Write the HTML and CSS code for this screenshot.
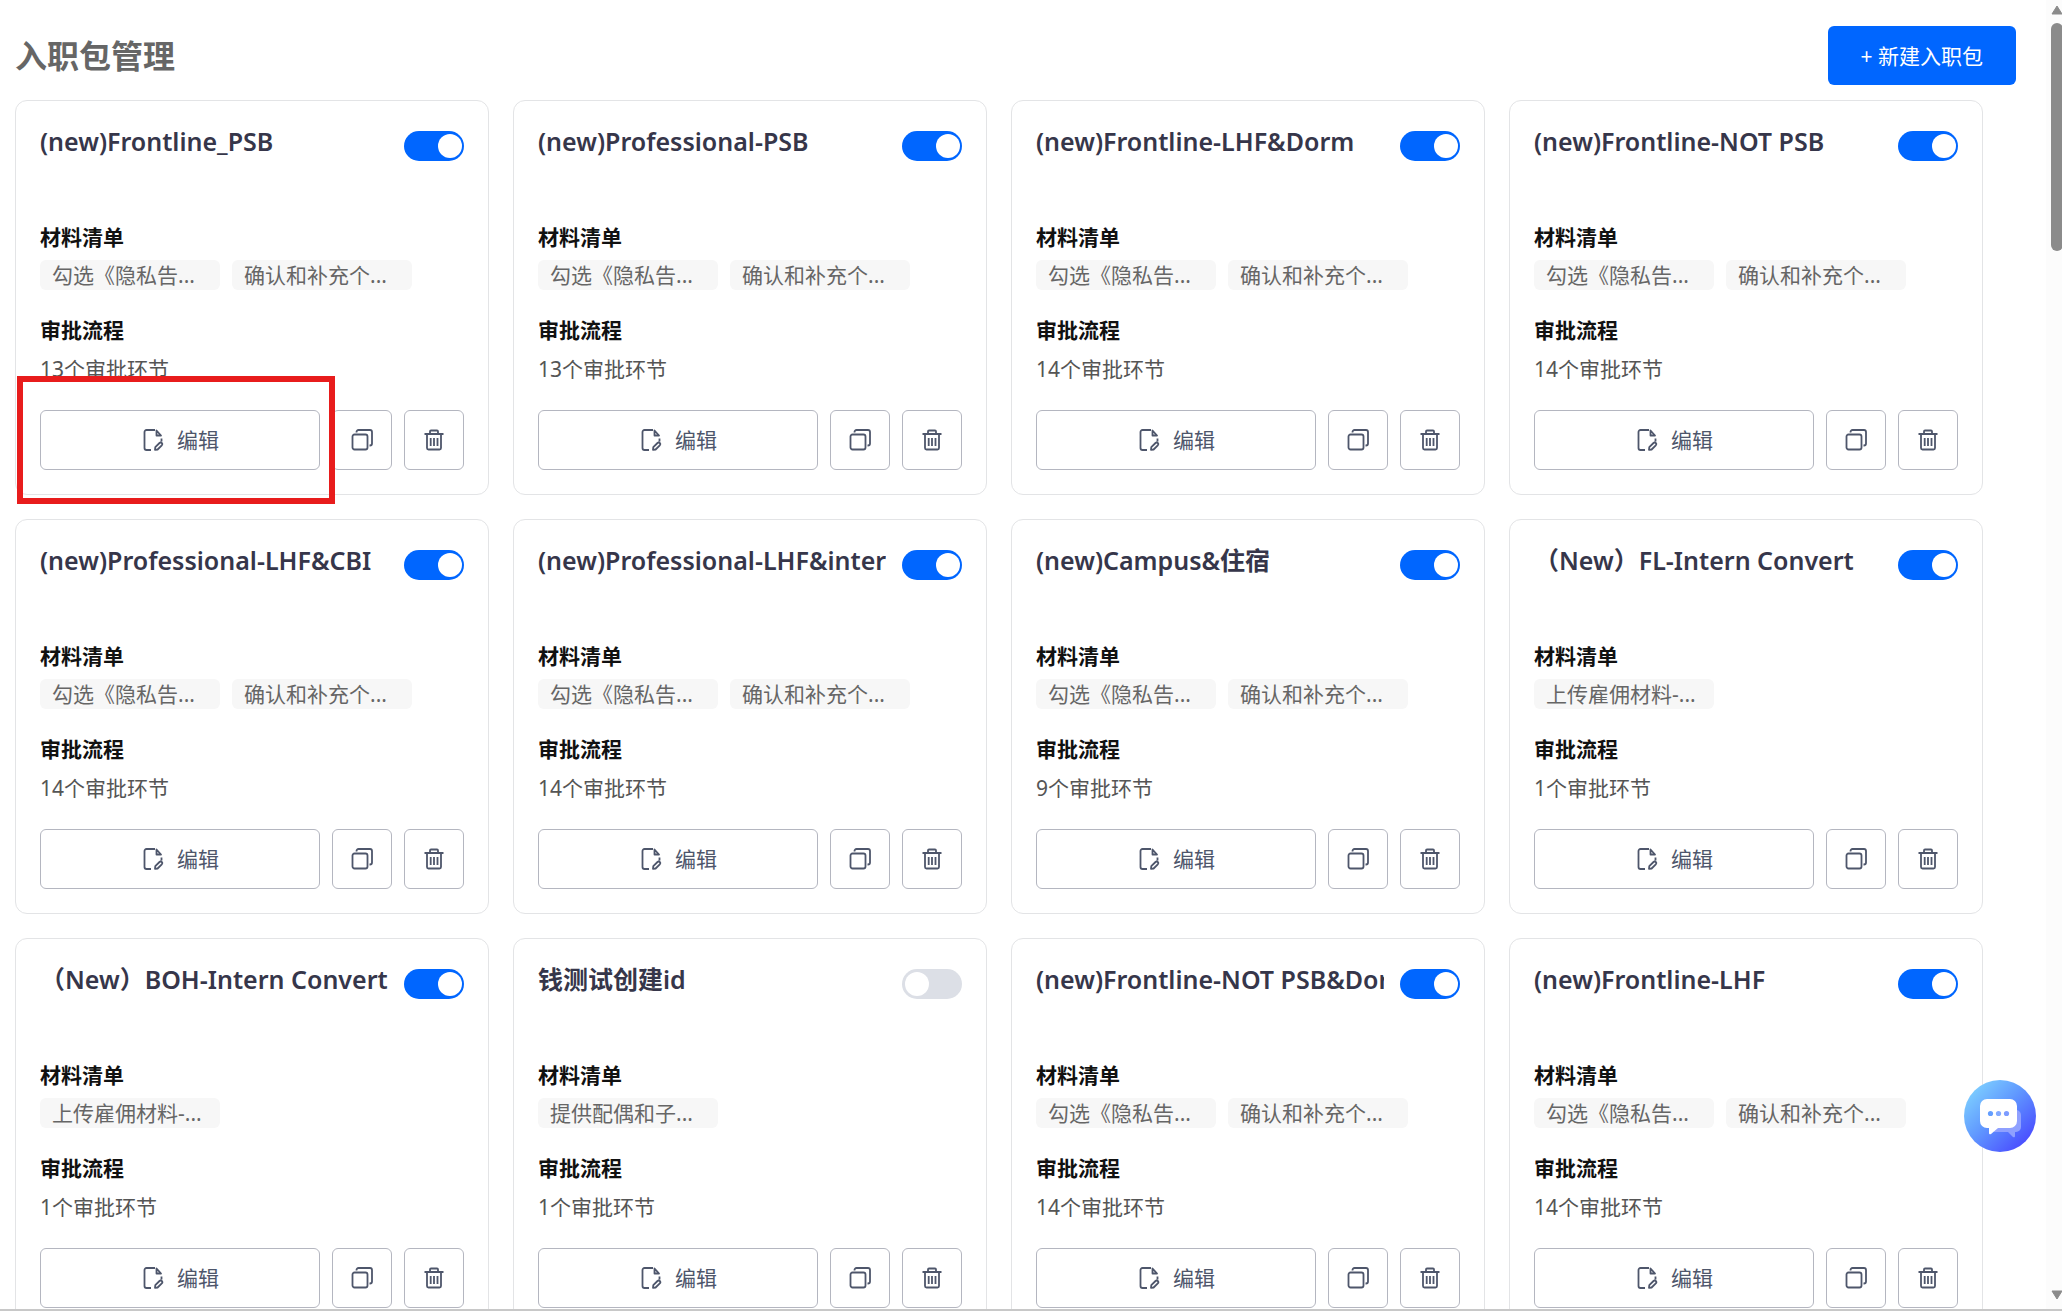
FILE: index.html
```html
<!DOCTYPE html>
<html lang="zh-CN">
<head>
<meta charset="utf-8">
<meta name="viewport" content="width=device-width, initial-scale=1">
<title>入职包管理</title>
<link rel="stylesheet" href="styles.css">
</head>
<body>
<svg class="sprite" aria-hidden="true">
  <symbol id="i-edit" viewBox="0 0 24 24"><path d="M14 2H5.500a2 2 0 0 0-2 2v16a2 2 0 0 0 2 2H10M15.500 2.500v5h4.500zM20.500 10.500v3M14.300 19.200l4.200-4.200a1.500 1.500 0 0 1 2.300 2.300l-4.200 4.200-2.600.400z"/></symbol>
  <symbol id="i-copy" viewBox="0 0 24 24"><rect x="2.500" y="6.500" width="15" height="15" rx="2"/><path d="M6.500 4.500V4a2 2 0 0 1 2-2h11.500a2 2 0 0 1 2 2v11.500a2 2 0 0 1-2 2h-.500"/></symbol>
  <symbol id="i-trash" viewBox="0 0 24 24"><path d="M2.500 6h19M8 6V3.500a1 1 0 0 1 1-1h6a1 1 0 0 1 1 1V6M5 6v14a1.500 1.500 0 0 0 1.500 1.500h11A1.500 1.500 0 0 0 19 20V6M8.700 10v8M12 10v8M15.500 10v8"/></symbol>
</svg>
<div class="app">
<main class="page">
  <header class="page-head">
    <h1>入职包管理</h1>
    <button class="create" type="button">+ 新建入职包</button>
  </header>
  <div class="cards">
    <article class="card">
      <div class="card-head"><h2>(new)Frontline_PSB</h2><input class="switch" type="checkbox" aria-label="启用" checked></div>
      <h3>材料清单</h3>
      <ul class="tags"><li>勾选《隐私告...</li><li>确认和补充个...</li></ul>
      <h3>审批流程</h3>
      <p class="count">13个审批环节</p>
      <div class="actions"><button class="edit" type="button"><svg><use href="#i-edit"/></svg>编辑</button><button type="button" aria-label="复制"><svg><use href="#i-copy"/></svg></button><button type="button" aria-label="删除"><svg><use href="#i-trash"/></svg></button></div>
      <div class="highlight"></div>
    </article>
    <article class="card">
      <div class="card-head"><h2>(new)Professional-PSB</h2><input class="switch" type="checkbox" aria-label="启用" checked></div>
      <h3>材料清单</h3>
      <ul class="tags"><li>勾选《隐私告...</li><li>确认和补充个...</li></ul>
      <h3>审批流程</h3>
      <p class="count">13个审批环节</p>
      <div class="actions"><button class="edit" type="button"><svg><use href="#i-edit"/></svg>编辑</button><button type="button" aria-label="复制"><svg><use href="#i-copy"/></svg></button><button type="button" aria-label="删除"><svg><use href="#i-trash"/></svg></button></div>
    </article>
    <article class="card">
      <div class="card-head"><h2>(new)Frontline-LHF&amp;Dorm</h2><input class="switch" type="checkbox" aria-label="启用" checked></div>
      <h3>材料清单</h3>
      <ul class="tags"><li>勾选《隐私告...</li><li>确认和补充个...</li></ul>
      <h3>审批流程</h3>
      <p class="count">14个审批环节</p>
      <div class="actions"><button class="edit" type="button"><svg><use href="#i-edit"/></svg>编辑</button><button type="button" aria-label="复制"><svg><use href="#i-copy"/></svg></button><button type="button" aria-label="删除"><svg><use href="#i-trash"/></svg></button></div>
    </article>
    <article class="card">
      <div class="card-head"><h2>(new)Frontline-NOT PSB</h2><input class="switch" type="checkbox" aria-label="启用" checked></div>
      <h3>材料清单</h3>
      <ul class="tags"><li>勾选《隐私告...</li><li>确认和补充个...</li></ul>
      <h3>审批流程</h3>
      <p class="count">14个审批环节</p>
      <div class="actions"><button class="edit" type="button"><svg><use href="#i-edit"/></svg>编辑</button><button type="button" aria-label="复制"><svg><use href="#i-copy"/></svg></button><button type="button" aria-label="删除"><svg><use href="#i-trash"/></svg></button></div>
    </article>
    <article class="card">
      <div class="card-head"><h2>(new)Professional-LHF&amp;CBI</h2><input class="switch" type="checkbox" aria-label="启用" checked></div>
      <h3>材料清单</h3>
      <ul class="tags"><li>勾选《隐私告...</li><li>确认和补充个...</li></ul>
      <h3>审批流程</h3>
      <p class="count">14个审批环节</p>
      <div class="actions"><button class="edit" type="button"><svg><use href="#i-edit"/></svg>编辑</button><button type="button" aria-label="复制"><svg><use href="#i-copy"/></svg></button><button type="button" aria-label="删除"><svg><use href="#i-trash"/></svg></button></div>
    </article>
    <article class="card">
      <div class="card-head"><h2>(new)Professional-LHF&amp;intern</h2><input class="switch" type="checkbox" aria-label="启用" checked></div>
      <h3>材料清单</h3>
      <ul class="tags"><li>勾选《隐私告...</li><li>确认和补充个...</li></ul>
      <h3>审批流程</h3>
      <p class="count">14个审批环节</p>
      <div class="actions"><button class="edit" type="button"><svg><use href="#i-edit"/></svg>编辑</button><button type="button" aria-label="复制"><svg><use href="#i-copy"/></svg></button><button type="button" aria-label="删除"><svg><use href="#i-trash"/></svg></button></div>
    </article>
    <article class="card">
      <div class="card-head"><h2>(new)Campus&amp;住宿</h2><input class="switch" type="checkbox" aria-label="启用" checked></div>
      <h3>材料清单</h3>
      <ul class="tags"><li>勾选《隐私告...</li><li>确认和补充个...</li></ul>
      <h3>审批流程</h3>
      <p class="count">9个审批环节</p>
      <div class="actions"><button class="edit" type="button"><svg><use href="#i-edit"/></svg>编辑</button><button type="button" aria-label="复制"><svg><use href="#i-copy"/></svg></button><button type="button" aria-label="删除"><svg><use href="#i-trash"/></svg></button></div>
    </article>
    <article class="card">
      <div class="card-head"><h2>（New）FL-Intern Convert</h2><input class="switch" type="checkbox" aria-label="启用" checked></div>
      <h3>材料清单</h3>
      <ul class="tags"><li>上传雇佣材料-...</li></ul>
      <h3>审批流程</h3>
      <p class="count">1个审批环节</p>
      <div class="actions"><button class="edit" type="button"><svg><use href="#i-edit"/></svg>编辑</button><button type="button" aria-label="复制"><svg><use href="#i-copy"/></svg></button><button type="button" aria-label="删除"><svg><use href="#i-trash"/></svg></button></div>
    </article>
    <article class="card">
      <div class="card-head"><h2>（New）BOH-Intern Convert</h2><input class="switch" type="checkbox" aria-label="启用" checked></div>
      <h3>材料清单</h3>
      <ul class="tags"><li>上传雇佣材料-...</li></ul>
      <h3>审批流程</h3>
      <p class="count">1个审批环节</p>
      <div class="actions"><button class="edit" type="button"><svg><use href="#i-edit"/></svg>编辑</button><button type="button" aria-label="复制"><svg><use href="#i-copy"/></svg></button><button type="button" aria-label="删除"><svg><use href="#i-trash"/></svg></button></div>
    </article>
    <article class="card">
      <div class="card-head"><h2>钱测试创建id</h2><input class="switch" type="checkbox" aria-label="启用"></div>
      <h3>材料清单</h3>
      <ul class="tags"><li>提供配偶和子...</li></ul>
      <h3>审批流程</h3>
      <p class="count">1个审批环节</p>
      <div class="actions"><button class="edit" type="button"><svg><use href="#i-edit"/></svg>编辑</button><button type="button" aria-label="复制"><svg><use href="#i-copy"/></svg></button><button type="button" aria-label="删除"><svg><use href="#i-trash"/></svg></button></div>
    </article>
    <article class="card">
      <div class="card-head"><h2>(new)Frontline-NOT PSB&amp;Dorm</h2><input class="switch" type="checkbox" aria-label="启用" checked></div>
      <h3>材料清单</h3>
      <ul class="tags"><li>勾选《隐私告...</li><li>确认和补充个...</li></ul>
      <h3>审批流程</h3>
      <p class="count">14个审批环节</p>
      <div class="actions"><button class="edit" type="button"><svg><use href="#i-edit"/></svg>编辑</button><button type="button" aria-label="复制"><svg><use href="#i-copy"/></svg></button><button type="button" aria-label="删除"><svg><use href="#i-trash"/></svg></button></div>
    </article>
    <article class="card">
      <div class="card-head"><h2>(new)Frontline-LHF</h2><input class="switch" type="checkbox" aria-label="启用" checked></div>
      <h3>材料清单</h3>
      <ul class="tags"><li>勾选《隐私告...</li><li>确认和补充个...</li></ul>
      <h3>审批流程</h3>
      <p class="count">14个审批环节</p>
      <div class="actions"><button class="edit" type="button"><svg><use href="#i-edit"/></svg>编辑</button><button type="button" aria-label="复制"><svg><use href="#i-copy"/></svg></button><button type="button" aria-label="删除"><svg><use href="#i-trash"/></svg></button></div>
    </article>
  </div>
</main>
<div class="scrollbar" aria-hidden="true">
  <svg class="arrow" viewBox="0 0 12 10"><path d="M6 1l5 8H1z"/></svg>
  <div class="thumb"></div>
  <svg class="arrow arrow-down" viewBox="0 0 12 10"><path d="M1 1h10L6 9z"/></svg>
</div>
</div>
<button class="chat" type="button" aria-label="在线咨询">
  <svg viewBox="0 0 72 72">
    <path fill="#8fa0ff" d="M30 30h22a5 5 0 0 1 5 5v12a5 5 0 0 1-5 5h-1v4q0 2-2 1l-5-5H30z"/>
    <path fill="#fff" d="M23 19h23a7 7 0 0 1 7 7v15a7 7 0 0 1-7 7H34l-7 6q-2 1-2-1v-5h-2a7 7 0 0 1-7-7V26a7 7 0 0 1 7-7z"/>
    <circle cx="26.500" cy="33.500" r="2.600" fill="#649eff"/><circle cx="34.500" cy="33.500" r="2.600" fill="#83aaff"/><circle cx="42.500" cy="33.500" r="2.600" fill="#7d9cff"/>
  </svg>
</button>
</body>
</html>
```
FILE: styles.css
```css
* {
  box-sizing: border-box;
}

body {
  margin: 0;
  background: #fff;
  color: #555;
  font: 21px/30px "Noto Sans", "Noto Sans CJK SC", sans-serif;
  overflow: hidden;
}

h1, h2, h3, p, ul {
  margin: 0;
  padding: 0;
}

button {
  font: inherit;
  cursor: pointer;
}

.sprite {
  display: none;
}

.app {
  display: flex;
  height: 100vh;
  border-bottom: 2px solid #c8c8c8;
}

.page {
  flex: 1;
  min-width: 0;
  overflow: hidden;
  padding: 26px 30px 0 15px;
}

.page-head {
  display: flex;
  justify-content: space-between;
  align-items: center;
  margin-bottom: 15px;
}

h1 {
  color: #666;
  font-size: 32px;
  line-height: 40px;
}

.create {
  height: 59px;
  padding: 0 33px;
  border: 0;
  border-radius: 6px;
  background: #0066ff;
  color: #fff;
}

.cards {
  display: grid;
  grid-template-columns: repeat(4, minmax(0, 1fr));
  gap: 24px;
  padding-right: 33px;
}

.card {
  position: relative;
  padding: 24px;
  border: 1px solid #e3e4e6;
  border-radius: 12px;
}

.card-head {
  display: flex;
  justify-content: space-between;
  gap: 16px;
  height: 96px;
}

h2 {
  flex: 1;
  min-width: 0;
  overflow: hidden;
  white-space: nowrap;
  color: #36364a;
  font-size: 25px;
  font-weight: 600;
  line-height: 32px;
}

.switch {
  appearance: none;
  flex: none;
  width: 60px;
  height: 30px;
  margin: 6px 0 0;
  padding: 3px;
  border-radius: 15px;
  background: #dcdfe6;
  cursor: pointer;
}

.switch::before {
  content: "";
  display: block;
  width: 24px;
  height: 24px;
  border-radius: 50%;
  background: #fff;
}

.switch:checked {
  padding-right: 2px;
  background: #0066ff;
}

.switch:checked::before {
  margin-left: auto;
}

h3 {
  color: #111;
  font-size: 21px;
  line-height: 32px;
}

.tags {
  display: flex;
  gap: 12px;
  margin: 7px 0 24px;
  list-style: none;
}

.tags li {
  width: 180px;
  height: 30px;
  padding: 0 12px;
  overflow: hidden;
  white-space: nowrap;
  border-radius: 6px;
  background: #f7f7f7;
  color: #666;
}

.count {
  margin: 8px 0 26px;
}

.actions {
  display: flex;
  gap: 12px;
}

.actions button {
  display: flex;
  align-items: center;
  justify-content: center;
  gap: 12px;
  width: 60px;
  height: 60px;
  padding: 0;
  border: 1px solid #b4b6c0;
  border-radius: 6px;
  background: #fff;
  color: #4e566b;
}

.actions .edit {
  flex: 1;
}

.actions svg {
  width: 24px;
  height: 24px;
  fill: none;
  stroke: currentColor;
  stroke-width: 1.8;
  stroke-linejoin: round;
}

.highlight {
  position: absolute;
  left: 1px;
  bottom: -10px;
  width: 318px;
  height: 128px;
  border: 6px solid #e81c1c;
}

.scrollbar {
  display: flex;
  flex-direction: column;
  width: 16px;
  padding: 5px 0 9px 5px;
  overflow: hidden;
  background: #fcfcfc;
}

.arrow {
  flex: none;
  width: 12px;
  height: 10px;
  fill: #8b8b8b;
  stroke: #8b8b8b;
  stroke-linejoin: round;
}

.arrow-down {
  margin-top: auto;
}

.thumb {
  width: 12px;
  height: 228px;
  margin-top: 8px;
  border-radius: 6px;
  background: #8b8b8b;
}

.chat {
  position: fixed;
  right: 26px;
  bottom: 159px;
  width: 72px;
  height: 72px;
  padding: 0;
  border: 0;
  border-radius: 50%;
  background: linear-gradient(135deg, #7ed0ff 10%, #619aff 45%, #4848ff 90%);
}

.chat svg {
  display: block;
}
```
